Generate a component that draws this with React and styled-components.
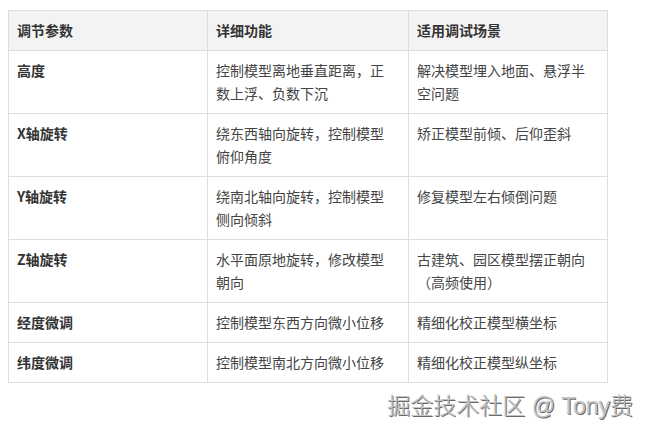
import React from 'react'
import styled, { createGlobalStyle } from 'styled-components';

const GlobalStyle = createGlobalStyle`
  body {
    margin: 0;
    background: #fff;
    font-family: "Noto Sans CJK SC", "Noto Sans", sans-serif;
  }
`;

const rows = [
  ['高度', '控制模型离地垂直距离，正数上浮、负数下沉', '解决模型埋入地面、悬浮半空问题'],
  ['X轴旋转', '绕东西轴向旋转，控制模型俯仰角度', '矫正模型前倾、后仰歪斜'],
  ['Y轴旋转', '绕南北轴向旋转，控制模型侧向倾斜', '修复模型左右倾倒问题'],
  ['Z轴旋转', '水平面原地旋转，修改模型朝向', '古建筑、园区模型摆正朝向（高频使用）'],
  ['经度微调', '控制模型东西方向微小位移', '精细化校正模型横坐标'],
  ['纬度微调', '控制模型南北方向微小位移', '精细化校正模型纵坐标'],
];

const App = () => {
  return (
    <>
      <GlobalStyle />
      <Pagina>
        <Tabla>
          <colgroup>
            <col style={{ width: 199 }} />
            <col style={{ width: 201 }} />
            <col style={{ width: 199 }} />
          </colgroup>
          <thead>
            <tr>
              <Celda as="th" header>调节参数</Celda>
              <Celda as="th" header>详细功能</Celda>
              <Celda as="th" header>适用调试场景</Celda>
            </tr>
          </thead>
          <tbody>
            {rows.map(([param, func, scene]) => (
              <tr key={param}>
                <Celda bold>{param}</Celda>
                <Celda>{func}</Celda>
                <Celda>{scene}</Celda>
              </tr>
            ))}
          </tbody>
        </Tabla>
        <MarcaAgua>掘金技术社区 @ Tony费</MarcaAgua>
      </Pagina>
    </>
  )
}

export default App;

  const Pagina = styled.div`
    width: 649px;
    height: 434px;
    padding: 10px 0 0 8px;
    box-sizing: border-box;
    overflow: hidden;
  `;

  const Tabla = styled.table`
    width: 599px;
    table-layout: fixed;
    border-collapse: collapse;
    font-size: 14px;
    line-height: 23px;
    color: #3c3c3c;
  `;

  const Celda = styled.td`
    border: 1px solid #dedede;
    padding: 8px 16px 8px 8px;
    text-align: left;
    vertical-align: top;
    font-weight: ${props => (props.header || props.bold) ? 700 : 400};
    color: ${props => (props.header || props.bold) ? '#333' : '#444'};
    background: ${props => props.header ? '#f3f3f3' : '#fff'};
    word-break: break-all;
  `;

  const MarcaAgua = styled.div`
    margin-top: 10px;
    padding-right: 16px;
    text-align: right;
    font-size: 23px;
    line-height: 26px;
    font-weight: 300;
    color: #c4c4c4;
    text-shadow: 1px 1px 0 #6a6a6a, -1px -1px 0 #fff, 0 0 1px #888;
    font-family: "Liberation Sans", "Noto Sans CJK SC", sans-serif;
  `;
